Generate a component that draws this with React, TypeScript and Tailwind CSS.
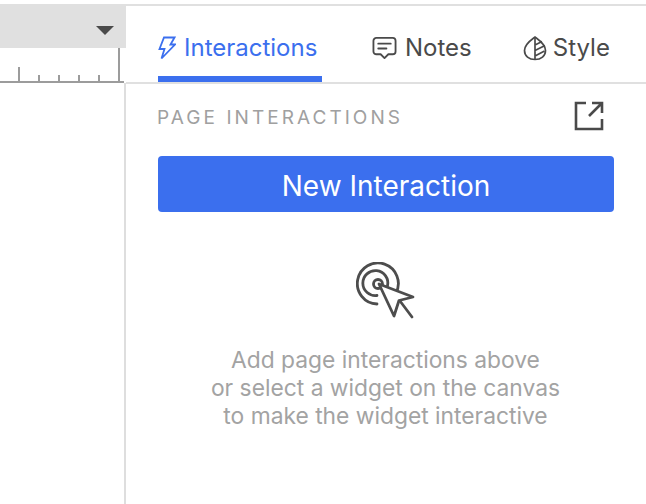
function Ruler() {
  return (
    <div className="mr-[2px] flex h-[35px] items-end border-b-2 border-[#9c9c9c] pr-1">
      <div className="flex h-full flex-1 items-end justify-end">
        <div className="mr-[18px] h-[14px] w-[2px] bg-[#9c9c9c]" />
        <div className="mr-[18px] h-[6px] w-[2px] bg-[#9c9c9c]" />
        <div className="mr-[18px] h-[6px] w-[2px] bg-[#9c9c9c]" />
        <div className="mr-[18px] h-[6px] w-[2px] bg-[#9c9c9c]" />
        <div className="mr-[18px] h-[6px] w-[2px] bg-[#9c9c9c]" />
        <div className="h-full w-[2px] bg-[#9c9c9c]" />
      </div>
    </div>
  );
}

function BoltIcon() {
  return (
    <svg width="18" height="24" viewBox="0 0 18 24" fill="none" stroke="#3b6fee" strokeWidth="1.8" strokeLinejoin="miter">
      <path d="M6 1.5H16.5L12.5 8.5H17L3.5 22.5L6.5 13H1.5Z" />
    </svg>
  );
}

function NoteIcon() {
  return (
    <svg width="25" height="25" viewBox="0 0 26 25" fill="none" stroke="#4a4a4a" strokeWidth="1.9" strokeLinecap="round" strokeLinejoin="round">
      <path d="M4.5 1.5H21.5C23 1.5 24.5 2.7 24.5 4.5V15.5C24.5 17.3 23 18.5 21.5 18.5H17L13 22.5L9 18.5H4.5C3 18.5 1.5 17.3 1.5 15.5V4.5C1.5 2.7 3 1.5 4.5 1.5Z" />
      <path d="M6.5 7.5H19.5M6.5 12.5H15" />
    </svg>
  );
}

function LeafIcon() {
  return (
    <svg width="24" height="26" viewBox="0 0 24 26" fill="none" stroke="#4a4a4a" strokeWidth="1.7" strokeLinejoin="round">
      <path d="M12 2C16 5 22.5 9 22.5 15.5C22.5 21 18 24.5 12 24.5C6 24.5 1.5 21 1.5 15.5C1.5 9 8 5 12 2Z" />
      <path d="M12 2V24.5M12 10L19 6.5M12 15.5L22 10.5M12 21L21.5 16" />
    </svg>
  );
}

function PopoutIcon() {
  return (
    <svg width="30" height="30" viewBox="0 0 30 30" fill="none" stroke="#4a4a4a" strokeWidth="2.6">
      <path d="M12 2H2V28H28V18" />
      <path d="M15 15L27 3M18 2H28V12" />
    </svg>
  );
}

function TargetIcon() {
  return (
    <svg width="60" height="60" viewBox="0 0 60 60" fill="none" stroke="#4d4d4d" strokeWidth="2.8" strokeLinecap="round" strokeLinejoin="round">
      <path d="M40 31A20.5 20.5 0 1 0 21 42" />
      <path d="M31.5 24A12.5 12.5 0 1 0 21 33.5" />
      <circle cx="22" cy="22" r="4.5" />
      <path d="M23 22L57 35L43 38.5L38 54Z" fill="white" />
      <path d="M44 39L56 55" />
    </svg>
  );
}

export default function App() {
  return (
    <div className="flex h-[504px] w-[646px] flex-col overflow-hidden bg-white font-['Inter',sans-serif]">
      <div className="mt-1 h-[2px] bg-[#e0e0e0]" />
      <div className="flex flex-1">
        <div className="flex w-[126px] flex-col">
          <div className="flex h-[42px] items-center justify-end bg-[#e0e0e0] pr-3 pt-[7px]">
            <div className="h-0 w-0 border-x-[9px] border-t-[9px] border-x-transparent border-t-[#4a4a4a]" />
          </div>
          <Ruler />
          <div className="flex-1 border-r-2 border-[#dedede]" />
        </div>
        <div className="flex flex-1 flex-col">
          <div className="flex h-[78px] border-b-2 border-[#e0e0e0] pl-8 text-[24px]">
            <div className="flex h-[76px] w-[164px] items-center gap-2 border-b-[6px] border-[#3b6fee] pt-[14px] text-[#3b6fee]">
              <BoltIcon />
              <span>Interactions</span>
            </div>
            <div className="ml-[50px] flex h-[76px] items-center gap-2 pt-2 text-[#4a4a4a]">
              <NoteIcon />
              <span>Notes</span>
            </div>
            <div className="ml-[51px] flex h-[76px] items-center gap-[6px] pt-2 text-[#4a4a4a]">
              <LeafIcon />
              <span>Style</span>
            </div>
          </div>
          <div className="flex flex-col pl-[31px] pr-8">
            <div className="mt-4 flex h-[32px] items-center justify-between pr-[10px]">
              <span className="pt-1 text-[19px] tracking-[3.05px] text-[#a0a0a0]">PAGE INTERACTIONS</span>
              <PopoutIcon />
            </div>
            <button className="ml-px mt-6 h-[56px] w-[456px] rounded bg-[#3b6fee] pt-1 text-[28px] text-white">New Interaction</button>
            <div className="mt-[50px] flex w-[456px] flex-col items-center">
              <div className="ml-px">
                <TargetIcon />
              </div>
              <p className="ml-px mt-6 text-center text-[22.8px] leading-[28px] text-[#a3a3a3]">
                Add page interactions above
                <br />
                or select a widget on the canvas
                <br />
                to make the widget interactive
              </p>
            </div>
          </div>
        </div>
      </div>
    </div>
  );
}
